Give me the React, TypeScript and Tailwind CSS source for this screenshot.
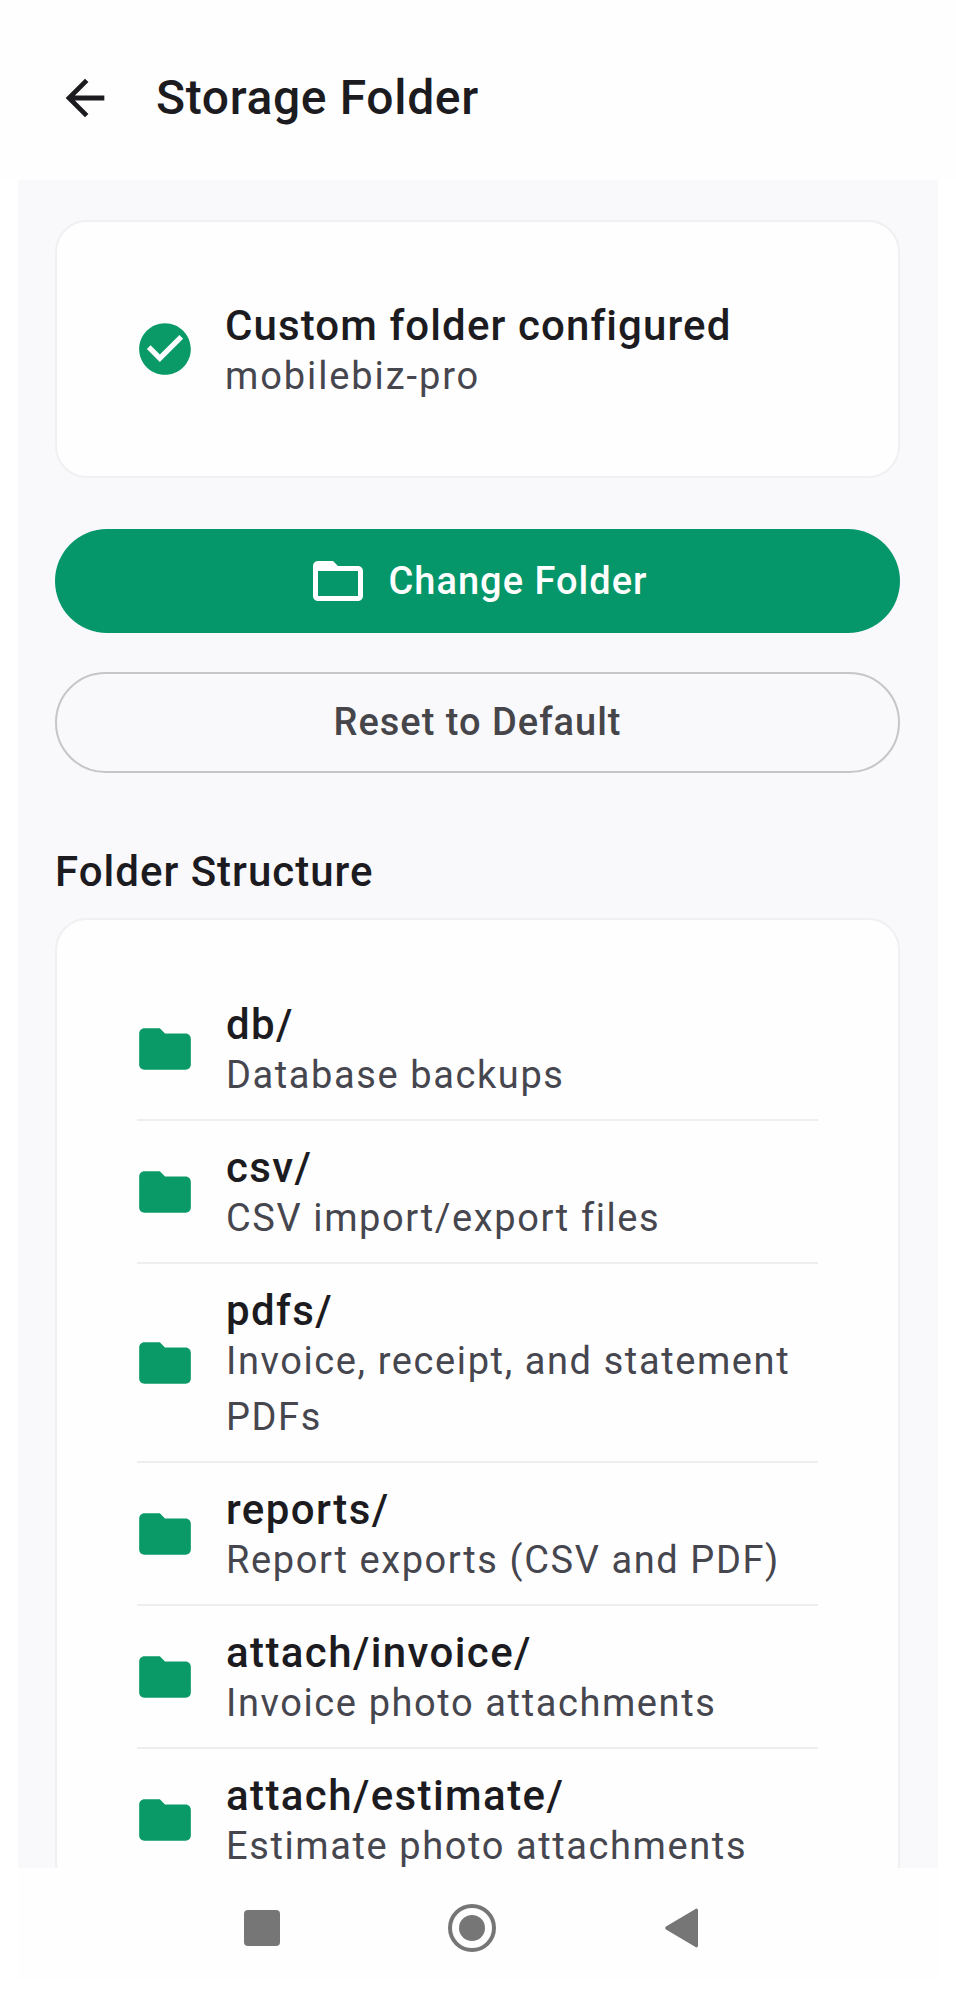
import React from "react";

const folders = [
  { name: "db/", desc: ["Database backups"] },
  { name: "csv/", desc: ["CSV import/export files"] },
  { name: "pdfs/", desc: ["Invoice, receipt, and statement", "PDFs"] },
  { name: "reports/", desc: ["Report exports (CSV and PDF)"] },
  { name: "attach/invoice/", desc: ["Invoice photo attachments"] },
  { name: "attach/estimate/", desc: ["Estimate photo attachments"] },
];

function FolderIcon() {
  return (
    <svg viewBox="0 0 24 24" className="w-[62px] h-[62px] -ml-[3px] shrink-0 fill-[#0a9a68]">
      <path d="M10 4H4c-1.1 0-1.99.9-1.99 2L2 18c0 1.1.9 2 2 2h16c1.1 0 2-.9 2-2V8c0-1.1-.9-2-2-2h-8l-2-2z" />
    </svg>
  );
}

export default function App() {
  return (
    <div className="flex flex-col h-[2000px] overflow-hidden bg-white font-['Roboto',sans-serif]">
      <header className="h-[180px] shrink-0 flex items-center pl-[56px] pt-[16px] bg-[#fefefe]">
        <svg viewBox="0 0 24 24" className="w-[58px] h-[58px] fill-[#1c1b1f]">
          <path d="M20 11H7.83l5.59-5.59L12 4l-8 8 8 8 1.41-1.41L7.83 13H20v-2z" />
        </svg>
        <h1 className="ml-[42px] text-[48px] leading-[56px] tracking-[0.65px] font-medium text-[#1c1b1f]">Storage Folder</h1>
      </header>

      <main className="flex-1 min-h-0 overflow-hidden ml-[18px] w-[920px] pl-[37px] pr-[38px] pt-[40px] bg-[#f9f9fc]">
        <div className="h-[258px] flex items-center pl-[77px] gap-[29px] rounded-[32px] bg-[#fefefe] border-2 border-[#f0f0f2]">
          <svg viewBox="0 0 24 24" className="w-[62px] h-[62px] shrink-0 fill-[#0a9a68]">
            <path d="M12 2C6.48 2 2 6.48 2 12s4.48 10 10 10 10-4.48 10-10S17.52 2 12 2zm-2 15l-5-5 1.41-1.41L10 14.17l7.59-7.59L19 8l-9 9z" />
          </svg>
          <div>
            <div className="text-[42px] leading-[54px] tracking-[1.1px] font-medium text-[#1c1b1f]">Custom folder configured</div>
            <div className="text-[38px] leading-[46px] tracking-[1.9px] text-[#46464f]">mobilebiz-pro</div>
          </div>
        </div>

        <button className="mt-[51px] w-full h-[104px] flex items-center justify-center gap-[21px] rounded-full bg-[#059669] text-white text-[38px] tracking-[1px] font-medium">
          <svg viewBox="0 0 24 24" className="w-[60px] h-[60px] fill-white">
            <path d="M20 6h-8l-2-2H4c-1.1 0-1.99.9-1.99 2L2 18c0 1.1.9 2 2 2h16c1.1 0 2-.9 2-2V8c0-1.1-.9-2-2-2zm0 12H4V8h16v10z" />
          </svg>
          Change Folder
        </button>

        <button className="mt-[39px] w-full h-[101px] flex items-center justify-center rounded-full border-2 border-[#c6c6c8] text-[#46464a] text-[38px] tracking-[1px] font-medium">
          Reset to Default
        </button>

        <h2 className="mt-[70px] h-[58px] leading-[58px] text-[42px] tracking-[1px] font-medium text-[#1c1b1f]">Folder Structure</h2>

        <div className="mt-[17px] pt-[58px] px-[80px] rounded-[32px] bg-[#fefefe] border-2 border-[#f0f0f2]">
          {folders.map((f) => (
            <div key={f.name} className="flex items-center gap-[30px] border-b-2 border-[#eeeef0]">
              <FolderIcon />
              <div className="pt-[24px] pb-[16px]">
                <div className="text-[42px] leading-[45px] tracking-[1.4px] font-medium text-[#1c1b1f]">{f.name}</div>
                {f.desc.map((d) => (
                  <div key={d} className="text-[38px] leading-[56px] tracking-[1.6px] text-[#46464f]">{d}</div>
                ))}
              </div>
            </div>
          ))}
        </div>
      </main>

      <nav className="h-[112px] shrink-0 mb-[20px] ml-[18px] w-[920px] pt-[8px] pr-[14px] flex items-center justify-center bg-[#fefefe]">
        <div className="w-[36px] h-[36px] rounded-[4px] bg-[#767676] mr-[168px]" />
        <div className="w-[48px] h-[48px] rounded-full border-[4px] border-[#767676] flex items-center justify-center mr-[169px]">
          <div className="w-[26px] h-[26px] rounded-full bg-[#767676]" />
        </div>
        <svg viewBox="0 0 34 40" className="w-[34px] h-[40px] fill-[#767676]">
          <path d="M33 2v36a1.500 1.500 0 0 1-2.500 1L1 21.500a2 2 0 0 1 0-3L30.500 1a1.500 1.500 0 0 1 2.500 1z" />
        </svg>
      </nav>
    </div>
  );
}
